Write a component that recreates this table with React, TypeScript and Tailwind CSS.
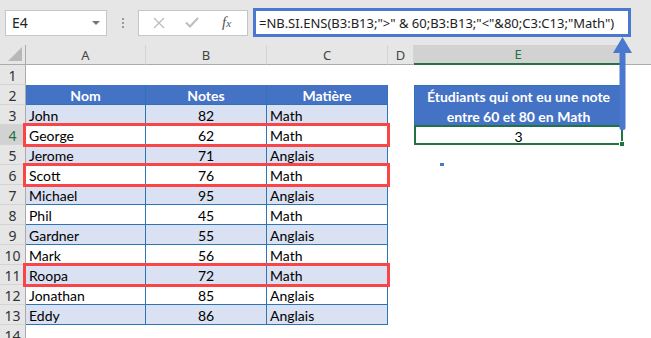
import React from 'react';

type Row = [string, number, string];

const students: Row[] = [
    ['John', 82, 'Math'],
    ['George', 62, 'Math'],
    ['Jerome', 71, 'Anglais'],
    ['Scott', 76, 'Math'],
    ['Michael', 95, 'Anglais'],
    ['Phil', 45, 'Math'],
    ['Gardner', 55, 'Anglais'],
    ['Mark', 56, 'Math'],
    ['Roopa', 72, 'Math'],
    ['Jonathan', 85, 'Anglais'],
    ['Eddy', 86, 'Anglais'],
];

const columns = ['A', 'B', 'C', 'D', 'E'];

const uiFont = "font-['Noto_Sans',sans-serif]";
const cellFont = "font-['Lato',sans-serif] text-[14px] leading-[20px]";

function FormulaBar() {
    return (
        <div className="flex h-[45px] items-center bg-[#e6e6e6] pl-[5px] pr-[20px]">
            {/* name box */}
            <div className="flex h-[26px] w-[102px] items-center justify-between border border-[#c6c6c6] bg-white pl-[6px] pr-[6px]">
                <span className={`${uiFont} text-[14px] text-[#222]`}>E4</span>
                <span className="h-0 w-0 border-x-[4px] border-t-[4px] border-x-transparent border-t-[#777]" />
            </div>
            <div className="flex w-[31px] flex-col items-center gap-[2px]">
                <span className="h-[2px] w-[2px] bg-[#9a9a9a]" />
                <span className="h-[2px] w-[2px] bg-[#9a9a9a]" />
                <span className="h-[2px] w-[2px] bg-[#9a9a9a]" />
            </div>
            {/* cancel / enter / insert function */}
            <div className="flex h-[26px] w-[110px] items-center border border-[#c6c6c6] bg-white">
                <svg width="12" height="12" viewBox="0 0 12 12" className="ml-[14px]">
                    <path d="M1 1L11 11M11 1L1 11" stroke="#bdbdbd" strokeWidth="1.4" />
                </svg>
                <svg width="14" height="11" viewBox="0 0 14 11" className="ml-[20px]">
                    <path d="M1 5.5L5 9.5L13 1" stroke="#bdbdbd" strokeWidth="2" fill="none" />
                </svg>
                <span className="ml-[23px] font-['Liberation_Serif',serif] text-[15px] italic text-[#555]">
                    f<span className="text-[11px]">x</span>
                </span>
            </div>
            <div className="ml-[5px] flex h-[29px] flex-1 items-center border-[3px] border-[#4a78cf] bg-white pl-[3px] pt-[2px]">
                <span className={`${uiFont} text-[13px] text-[#222] whitespace-pre`}>
                    =NB.SI.ENS(B3:B13;"&gt;" &amp; 60;B3:B13;"&lt;"&amp;80;C3:C13;"Math")
                </span>
            </div>
        </div>
    );
}

function ColumnHeaders() {
    return (
        <>
            <div className="relative h-[20px] border-r border-b border-[#ababab] bg-[#e6e6e6]">
                <svg width="14" height="14" className="absolute right-[3px] bottom-[3px]" viewBox="0 0 14 14">
                    <path d="M14 0L14 14L0 14Z" fill="#b8b8b8" />
                </svg>
            </div>
            {columns.map((c) =>
                c === 'E' ? (
                    <div
                        key={c}
                        className={`${uiFont} flex h-[20px] items-center justify-center border-r border-b-2 border-r-[#ababab] border-b-[#217346] bg-[#d2d2d2] pt-[2px] text-[13px] text-[#217346]`}
                    >
                        {c}
                    </div>
                ) : (
                    <div
                        key={c}
                        className={`${uiFont} flex h-[20px] items-center justify-center border-r border-b border-[#ababab] border-r-[#d4d4d4] bg-[#e6e6e6] pt-[2px] text-[13px] text-[#444]`}
                    >
                        {c}
                    </div>
                ),
            )}
            <div className="h-[20px] border-b border-[#ababab] bg-[#e6e6e6]" />
        </>
    );
}

function RowHeader({ n }: { n: number }) {
    const selected = n === 4;
    return (
        <div
            className={`${uiFont} flex h-[20px] items-center justify-center border-r border-b border-r-[#ababab] border-b-[#d4d4d4] pt-[1px] text-[14px] ${
                selected ? 'bg-[#d2d2d2] text-[#217346]' : 'bg-[#e6e6e6] text-[#333]'
            }`}
        >
            {n}
        </div>
    );
}

function Sheet() {
    return (
        <div className="relative grid grid-cols-[26px_120px_121px_121px_26px_209px_1fr] auto-rows-[20px]">
            <ColumnHeaders />

            {/* row 1 */}
            <RowHeader n={1} />
            <div className="col-span-6 bg-white" />

            {/* row 2: table headers + merged result label */}
            <RowHeader n={2} />
            {['Nom', 'Notes', 'Matière'].map((h) => (
                <div
                    key={h}
                    className={`${cellFont} border-r border-b border-[#2e75b6] bg-[#4472c4] pt-[1px] text-center font-bold text-white`}
                >
                    {h}
                </div>
            ))}
            <div className="bg-white" />
            <div
                className={`${cellFont} row-span-2 border-x border-t border-[#2e75b6] bg-[#4472c4] pt-[1px] text-center font-bold text-white`}
            >
                Étudiants qui ont eu une note
                <br />
                entre 60 et 80 en Math
            </div>
            <div className="bg-white" />

            {students.map(([name, score, subject], i) => {
                const n = i + 3;
                const fill = i % 2 === 0 ? 'bg-[#d9e1f2]' : 'bg-white';
                return (
                    <React.Fragment key={name}>
                        <RowHeader n={n} />
                        <div className={`${cellFont} ${fill} border-r border-b border-[#2e75b6] pt-[1px] pl-[3px] text-black`}>
                            {name}
                        </div>
                        <div className={`${cellFont} ${fill} border-r border-b border-[#2e75b6] pt-[1px] text-center text-black`}>
                            {score}
                        </div>
                        <div className={`${cellFont} ${fill} border-r border-b border-[#2e75b6] pt-[1px] pl-[3px] text-black`}>
                            {subject}
                        </div>
                        <div className="bg-white" />
                        {n === 3 ? null : n === 4 ? (
                            <div className={`${cellFont} relative border-2 border-[#217346] bg-white text-center leading-[16px] text-black`}>
                                3
                                <span className="absolute -right-[4px] -bottom-[4px] h-[6px] w-[6px] border border-white bg-[#217346]" />
                            </div>
                        ) : (
                            <div className="bg-white" />
                        )}
                        <div className="bg-white" />
                    </React.Fragment>
                );
            })}

            <RowHeader n={14} />
            <div className="col-span-6 bg-white" />

            {/* highlighted rows */}
            {[4, 6, 11].map((r) => (
                <div
                    key={r}
                    className="pointer-events-none absolute left-[23px] h-[24px] w-[367px] border-[3px] border-[#f94545]"
                    style={{ top: 20 + (r - 1) * 20 - 2 }}
                />
            ))}

            <span className="absolute left-[440px] top-[118px] h-[3px] w-[4px] bg-[#4a78cf]" />
        </div>
    );
}

export default function App() {
    return (
        <div className="relative h-[338px] w-[651px] overflow-hidden bg-white">
            <FormulaBar />
            <Sheet />
            {/* arrow from the result cell up to the formula */}
            <svg className="absolute left-[610px] top-[36px]" width="26" height="96" viewBox="0 0 26 96">
                <path d="M12.5 1L22 17H3Z" fill="#4a78cf" />
                <rect x="9.5" y="16" width="6" height="78" rx="2" fill="#4a78cf" />
            </svg>
        </div>
    );
}
